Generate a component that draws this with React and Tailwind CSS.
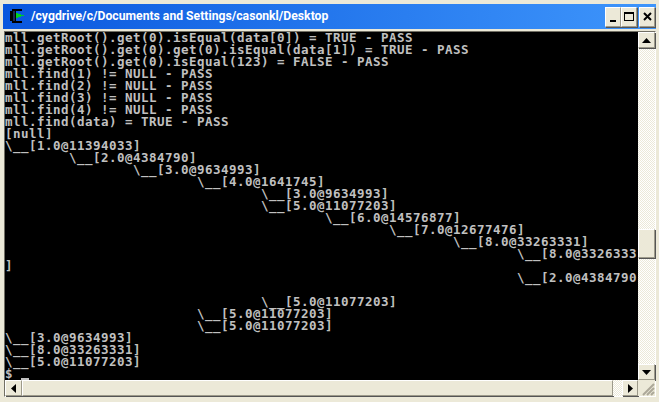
const LINES = [
  "mll.getRoot().get(0).isEqual(data[0]) = TRUE - PASS",
  "mll.getRoot().get(0).get(0).isEqual(data[1]) = TRUE - PASS",
  "mll.getRoot().get(0).isEqual(123) = FALSE - PASS",
  "mll.find(1) != NULL - PASS",
  "mll.find(2) != NULL - PASS",
  "mll.find(3) != NULL - PASS",
  "mll.find(4) != NULL - PASS",
  "mll.find(data) = TRUE - PASS",
  "[null]",
  "\\__[1.0@11394033]",
  "        \\__[2.0@4384790]",
  "                \\__[3.0@9634993]",
  "                        \\__[4.0@1641745]",
  "                                \\__[3.0@9634993]",
  "                                \\__[5.0@11077203]",
  "                                        \\__[6.0@14576877]",
  "                                                \\__[7.0@12677476]",
  "                                                        \\__[8.0@33263331]",
  "                                                                \\__[8.0@3326333",
  "]",
  "                                                                \\__[2.0@4384790",
  " ",
  "                                \\__[5.0@11077203]",
  "                        \\__[5.0@11077203]",
  "                        \\__[5.0@11077203]",
  "\\__[3.0@9634993]",
  "\\__[8.0@33263331]",
  "\\__[5.0@11077203]",
];

function Raised({ className = "", children }) {
  return (
    <div className={`flex items-center justify-center shrink-0 bg-[#ece9d8] border border-t-white border-l-white border-r-[#9d9a8a] border-b-[#9d9a8a] shadow-[1px_1px_0_#555] ${className}`}>
      {children}
    </div>
  );
}

function TitleIcon() {
  return (
    <svg width="15" height="15" viewBox="0 0 15 15" className="shrink-0">
      <path d="M2 0h10v2H6v10h6v2H2v-2H0V2h2z" fill="#000" />
      <path d="M3 2h2v10H3z" fill="#1a2c52" />
      <path d="M6 4h2v1h3v1h3v1h-3v1H8v1H6z" fill="#00d020" />
    </svg>
  );
}

function Arrow({ d }) {
  return (
    <svg width="9" height="9" viewBox="0 0 9 9">
      <path d={d} fill="#000" />
    </svg>
  );
}

export default function App() {
  return (
    <div className="w-[659px] h-[402px] flex flex-col bg-[#ece9d8] overflow-hidden">
      {/* TITLE BAR */}
      <div className="h-[25px] mx-[3px] mt-[4px] pl-[7px] pr-[1px] flex items-center bg-gradient-to-r from-[#0a57de] to-[#3e95fb]">
        <TitleIcon />
        <p className="ml-[6px] text-white font-bold text-[12.2px] whitespace-pre font-['Roboto',sans-serif]">/cygdrive/c/Documents and Settings/casonkl/Desktop</p>
        <div className="ml-auto flex items-center">
          <Raised className="w-[16px] h-[20px]">
            <span className="w-[6px] h-[2px] bg-black mt-[8px] mr-[1px]" />
          </Raised>
          <Raised className="w-[16px] h-[20px]">
            <span className="w-[10px] h-[9px] border border-t-2 border-black" />
          </Raised>
          <Raised className="w-[16px] h-[20px] ml-[2px]">
            <svg width="9" height="9" viewBox="0 0 9 9">
              <path d="M1 1l7 7M8 1L1 8" stroke="#000" strokeWidth="2" />
            </svg>
          </Raised>
        </div>
      </div>

      {/* CLIENT AREA */}
      <div className="flex-1 flex flex-col ml-[4px] mr-[3px] mt-[2px] mb-[5px] min-h-0 border border-t-[#716f64] border-l-[#716f64] border-r-white border-b-white">
        <div className="flex-1 flex min-h-0">
          <div className="flex-1 bg-black overflow-hidden min-w-0 text-[12.5px] tracking-[0.4744px] leading-[12px] text-[#c0c0c0] font-bold font-['DejaVu_Sans_Mono',monospace] whitespace-pre">
            {LINES.map((line, i) => (
              <div key={i} className="h-[12px]">{line}</div>
            ))}
            <div className="h-[12px]">
              $ <span className="inline-block w-[8px] h-[3px] bg-[#c0c0c0] align-[-3px]" />
            </div>
          </div>
          {/* VERTICAL SCROLLBAR */}
          <div className="w-[17px] flex flex-col bg-[repeating-conic-gradient(#fff_0_25%,#ece9d8_0_50%)] bg-[length:2px_2px]">
            <Raised className="h-[16px]"><Arrow d="M4.5 2L9 7H0z" /></Raised>
            <div className="flex-1 pt-[181px]">
              <Raised className="h-[29px]" />
            </div>
            <Raised className="h-[16px]"><Arrow d="M0 2h9L4.5 7z" /></Raised>
          </div>
        </div>
        {/* HORIZONTAL SCROLLBAR */}
        <div className="h-[16px] flex">
          <Raised className="w-[17px]"><Arrow d="M7 0v9L2 4.5z" /></Raised>
          <Raised className="w-[591px]" />
          <div className="flex-1 bg-[repeating-conic-gradient(#fff_0_25%,#ece9d8_0_50%)] bg-[length:2px_2px]" />
          <Raised className="w-[16px]"><Arrow d="M2 0v9l5-4.5z" /></Raised>
          <div className="w-[17px] flex items-end justify-end bg-[#ece9d8]">
            <svg width="13" height="13" viewBox="0 0 13 13">
              <path d="M12 1L1 12M12 5L5 12M12 9L9 12" stroke="#aca899" strokeWidth="2" />
            </svg>
          </div>
        </div>
      </div>
    </div>
  );
}
